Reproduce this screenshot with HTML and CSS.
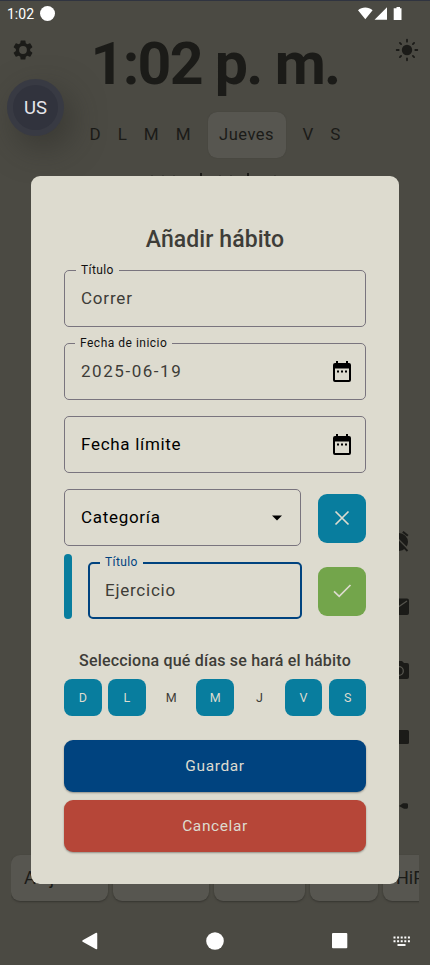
FILE: index.html
```html
<!DOCTYPE html>
<html lang="es">
<head>
<meta charset="utf-8">
<title>Añadir hábito</title>
<link rel="stylesheet" href="styles.css">
</head>
<body>
<main class="screen">
  <div class="status">
    <span class="status-time">1:02</span><i class="status-dot"></i>
    <svg class="status-icons" width="46" height="16" viewBox="0 0 46 16"><path fill="#fff" d="M0 3.300C4-.3 10.500-.3 14.600 3.300L7.300 12.300ZM29 .2V12.800H16.500ZM38.500 0H42V1.300H43.500V13H35.700V1.300H38.500Z"/></svg>
  </div>
  <header class="top">
    <svg class="gear" width="24" height="24" viewBox="0 0 24 24"><path fill-rule="evenodd" d="M19.140 12.940a7 7 0 0 0 0-1.880l2.030-1.580a.5.5 0 0 0 .12-.61l-1.920-3.320a.5.5 0 0 0-.59-.22l-2.390.96a7 7 0 0 0-1.620-.94l-.36-2.540a.5.5 0 0 0-.48-.41h-3.840a.5.5 0 0 0-.47.41l-.36 2.540a7.400 7.400 0 0 0-1.620.94l-2.390-.96a.5.5 0 0 0-.59.22L2.740 8.870a.5.5 0 0 0 .12.61l2.030 1.580a7 7 0 0 0 0 1.880l-2.030 1.580a.5.5 0 0 0-.12.610l1.920 3.320c.12.22.37.29.59.22l2.390-.96c.5.38 1.030.7 1.620.94l.36 2.540c.05.24.24.41.48.41h3.840c.24 0 .44-.17.47-.41l.36-2.540a7 7 0 0 0 1.620-.94l2.390.96c.22.08.47 0 .59-.22l1.920-3.320a.5.5 0 0 0-.12-.61zM12 15.900A3.900 3.900 0 1 1 12 8.100a3.900 3.900 0 0 1 0 7.800z"/></svg>
    <h1 class="clock">1:02 p. m.</h1>
    <svg class="sun" width="24" height="24" viewBox="0 0 24 24"><circle cx="12" cy="12" r="5.200"/><path stroke="#1b1b18" stroke-width="1.800" stroke-linecap="round" d="M12 1.700v2M12 20.300v2M1.700 12h2M20.300 12h2M4.900 4.900l1.200 1.200M17.900 17.900l1.200 1.200M4.900 19.100l1.200-1.200M17.900 6.100l1.200-1.200"/></svg>
  </header>
  <div class="week"><span>D</span><span>L</span><span>M</span><span>M</span><b class="today">Jueves</b><span>V</span><span>S</span></div>
  <div class="ticks"><i></i><i></i><i></i><i class="tall"></i><i></i><i></i><i class="tall"></i><i></i></div>
  <div class="side">
    <svg width="24" height="24" viewBox="0 0 24 24"><circle cx="12" cy="13" r="9"/><path d="M16.500 2l5 4-1.300 1.500-5-4z"/><path stroke="#4b4a43" stroke-width="1.600" d="M5 4l17 17"/><path stroke="#1b1b18" stroke-width="1.800" d="M3 4.500l17.500 17.500"/></svg>
    <svg width="24" height="24" viewBox="0 0 24 24"><rect x="2" y="3.500" width="20" height="16.500" rx="2"/><path fill="none" stroke="#55544d" stroke-width="1.300" d="M4 6l8 5.500L20 6"/></svg>
    <svg width="24" height="24" viewBox="0 0 24 24"><path d="M9 3h6l2 2h3a2 2 0 0 1 2 2v12a2 2 0 0 1-2 2H4a2 2 0 0 1-2-2V7a2 2 0 0 1 2-2h3z"/><circle cx="12" cy="13" r="4.300" fill="none" stroke="#55544d" stroke-width="1.300"/></svg>
    <svg width="24" height="24" viewBox="0 0 24 24"><rect x="2" y="5" width="20" height="14" rx="1.500"/></svg>
    <svg width="24" height="24" viewBox="0 0 24 24"><path d="M12 13l4-2.800h3.500q2 0 1.500 2v2q-.2 1.500-1.500 1.500H17z"/></svg>
  </div>
  <div class="apps"><span class="app a1">Alejan</span><span class="app a2"></span><span class="app a3"></span><span class="app a4"></span><span class="app a5">HiP</span></div>
  <nav class="nav">
    <svg width="18" height="18" viewBox="0 0 18 18"><path fill="#fff" stroke="#fff" stroke-width="1.500" stroke-linejoin="round" d="M2 9L15.500 1.500V16.500Z"/></svg>
    <svg width="18" height="18" viewBox="0 0 18 18"><circle fill="#fff" cx="9" cy="9" r="8.800"/></svg>
    <svg width="16" height="16" viewBox="0 0 16 16"><rect fill="#fff" width="15.300" height="15.300" rx="1"/></svg>
    <svg width="17" height="10" viewBox="0 0 17 10"><path stroke="#fff" stroke-width="2" stroke-dasharray="2 1.600" d="M.5 1.500H17M.5 5.300H17"/><path stroke="#fff" stroke-width="1.900" d="M4.500 9H12.500"/></svg>
  </nav>

  <div class="avatar">US</div>

  <form class="dialog">
    <h2>Añadir hábito</h2>
    <div class="field"><label>Título</label><span class="value correr">Correr</span></div>
    <div class="field"><label class="start">Fecha de inicio</label><span class="value date">2025-06-19</span>
      <svg width="24" height="24" viewBox="0 0 24 24"><path d="M19 3h-1V1h-2v2H8V1H6v2H5a2 2 0 0 0-2 2v15a2 2 0 0 0 2 2h14a2 2 0 0 0 2-2V5a2 2 0 0 0-2-2zm0 17H5V8.500h14zM7 10.500h2v2H7zm4 0h2v2h-2zm4 0h2v2h-2z" fill-rule="evenodd"/></svg></div>
    <div class="field"><span class="value dark limit">Fecha límite</span>
      <svg width="24" height="24" viewBox="0 0 24 24"><path d="M19 3h-1V1h-2v2H8V1H6v2H5a2 2 0 0 0-2 2v15a2 2 0 0 0 2 2h14a2 2 0 0 0 2-2V5a2 2 0 0 0-2-2zm0 17H5V8.500h14zM7 10.500h2v2H7zm4 0h2v2h-2zm4 0h2v2h-2z" fill-rule="evenodd"/></svg></div>
    <div class="row">
      <div class="field"><span class="value dark cat">Categoría</span>
        <svg width="24" height="24" viewBox="0 0 24 24"><path d="M7 9.500l5 5 5-5z"/></svg></div>
      <button type="button" class="square teal"><svg width="24" height="24" viewBox="0 0 24 24"><path d="M5.500 5.500l13 13M18.500 5.500l-13 13"/></svg></button>
    </div>
    <div class="row second">
      <i class="swatch"></i>
      <div class="field focus"><label>Título</label><span class="value ejer">Ejercicio</span></div>
      <button type="button" class="square green"><svg width="24" height="24" viewBox="0 0 24 24"><path d="M4 12.300l5.200 5L20.500 6"/></svg></button>
    </div>
    <p class="prompt">Selecciona qué días se hará el hábito</p>
    <div class="days"><span class="on">D</span><span class="on">L</span><span>M</span><span class="on">M</span><span>J</span><span class="on">V</span><span class="on">S</span></div>
    <button type="button" class="wide save">Guardar</button>
    <button type="button" class="wide cancel">Cancelar</button>
  </form>
</main>
</body>
</html>
```
FILE: styles.css
```css
* { box-sizing: border-box; }
body { margin: 0; font-family: Roboto, "Liberation Sans", sans-serif; }
svg { display: block; flex: none; }
i { font-style: normal; }
.screen { position: relative; width: 430px; height: 965px; overflow: hidden; display: flex; flex-direction: column; background: #4b4a43; border-top: 1px solid #303440; color: #1b1b18; fill: #1b1b18; }
.status { height: 25px; flex: none; padding: 0 26px 0 7px; display: flex; align-items: center; color: #fff; }
.status-time { font-size: 14px; }
.status-dot { width: 15px; height: 15px; margin-left: 6px; border-radius: 50%; background: #fff; }
.status-icons { margin: 2px 0 0 auto; }
.top { height: 78px; flex: none; display: flex; justify-content: space-between; padding: 11px 11px 0; }
.clock { margin: -1px 0 0; font-size: 59px; line-height: 56px; font-weight: 700; letter-spacing: -1.700px; white-space: nowrap; }
.gear { margin-top: 1px; }
.sun { margin-top: 1px; }
.week { height: 61px; flex: none; display: flex; align-items: center; justify-content: center; gap: 17px; font-size: 17px; line-height: 19px; }
.today { width: 78px; height: 46px; border-radius: 9px; background: #575650; display: flex; align-items: center; justify-content: center; font-weight: 400; font-size: 16.500px; letter-spacing: .5px; box-shadow: 0 0 1px #3e3d38; }
.ticks { display: flex; align-items: flex-end; height: 11px; padding-left: 151px; gap: 9px; }
.ticks i { width: 2px; height: 1px; background: #3c3b36; }
.ticks .tall { height: 3px; margin: 0 8px 0 16px; background: #1b1b18; }
.ticks .tall ~ .tall { margin: 0 16px 0 6px; }
.side { height: 288px; margin: 353px 19px 0 auto; flex: none; display: flex; flex-direction: column; justify-content: space-between; }
.side svg:nth-child(2) { margin-top: -1px; margin-bottom: -1px; }
.side svg:nth-child(3) { margin-top: -2px; }
.side svg:nth-child(4) { margin-bottom: 2px; }
.apps { display: flex; gap: 5px; margin: 37px 11px 0; padding-top: 1px; height: 51px; flex: none; overflow: hidden; }
.app { height: 46px; flex: none; border-radius: 9px; background: #575650; font-size: 18px; line-height: 46px; padding-left: 13px; box-shadow: 0 1px 2px #363530; }
.a1 { width: 97px; } .a2 { width: 96px; } .a3 { width: 91px; } .a4 { width: 68px; } .a5 { width: 80px; }
.nav { display: grid; grid-template-columns: 152.500px 125px 96px 56px; align-items: center; margin-top: 12px; height: 48px; }
.nav svg { justify-self: center; }
.nav svg:first-child { margin-left: 28px; }
.nav svg:nth-child(3) { margin-left: 29px; }
.nav svg:nth-child(4) { margin-left: 0; }
.avatar { position: absolute; left: 7px; top: 78px; width: 57px; height: 57px; border: 6px solid #383a43; border-radius: 50%; background: #31333d; color: #e6e6ea; display: flex; align-items: center; justify-content: center; font-size: 18.500px; box-shadow: 8px 12px 32px rgba(40,39,35,.5); }
.dialog { position: absolute; left: 31px; top: 175px; width: 368px; height: 708px; padding: 49px 33px 32px; border-radius: 9px; background: #dddbcf; color: #3e3d38; display: flex; flex-direction: column; }
.dialog h2 { margin: 0 0 18px; height: 27px; font-size: 23px; line-height: 29px; font-weight: 500; letter-spacing: .08px; text-align: center; }
.field { position: relative; height: 57px; flex: none; display: flex; align-items: center; justify-content: space-between; padding: 0 11px 0 16px; border: 1px solid #79747e; border-radius: 5px; margin-bottom: 16px; fill: #000; }
.field label { position: absolute; left: 11px; top: -9px; padding: 0 5px; font-size: 12px; line-height: 17px; letter-spacing: .4px; color: #111; background: #dddbcf; }
.field label.start { letter-spacing: .5px; left: 10px; }
.value { font-size: 17px; letter-spacing: .5px; padding-bottom: 2px; }
.date { letter-spacing: 1.550px; }
.correr { letter-spacing: .8px; }
.limit, .cat { letter-spacing: .7px; }
.dark { color: #000; }
.row { display: flex; align-items: center; gap: 16.500px; height: 57px; flex: none; }
.row .field { flex: 1; margin: 0; }
.second { height: 65px; margin-top: 8px; gap: 16px; }
.second .field { margin-top: 8px; border: 2px solid #00437f; padding-left: 15px; }
.second .field label { color: #00437f; left: 10px; top: -10px; }
.ejer { letter-spacing: .75px; }
.swatch { width: 8px; height: 65px; border-radius: 4px; background: #087d9e; }
.square { width: 48.500px; height: 49px; border: 0; padding: 0; border-radius: 9px; display: grid; place-items: center; fill: none; stroke: #dddbcf; stroke-width: 1.700; margin-top: 1px; }
.second .square { margin-top: 9px; }
.teal { background: #087d9e; }
.green { background: #73a54b; }
.prompt { margin: 31px 0 8px; font-size: 16px; line-height: 21px; font-weight: 500; letter-spacing: .2px; text-align: center; white-space: nowrap; }
.days { display: grid; grid-template-columns: repeat(7, 1fr); gap: 6.500px; height: 37px; margin: 0 -.5px 24px 0; }
.days span { display: grid; place-items: center; border-radius: 8px; font-size: 12.500px; }
.days .on { background: #087d9e; color: #dddbcf; }
.wide { height: 52px; flex: none; border: 0; border-radius: 9px; padding: 0 6px; font: 400 15.500px Roboto, sans-serif; letter-spacing: .6px; color: #dddbcf; box-shadow: 0 1px 2px rgba(0,0,0,.35); }
.save { background: #00437f; margin-bottom: 8px; }
.cancel { background: #b64638; }
```
